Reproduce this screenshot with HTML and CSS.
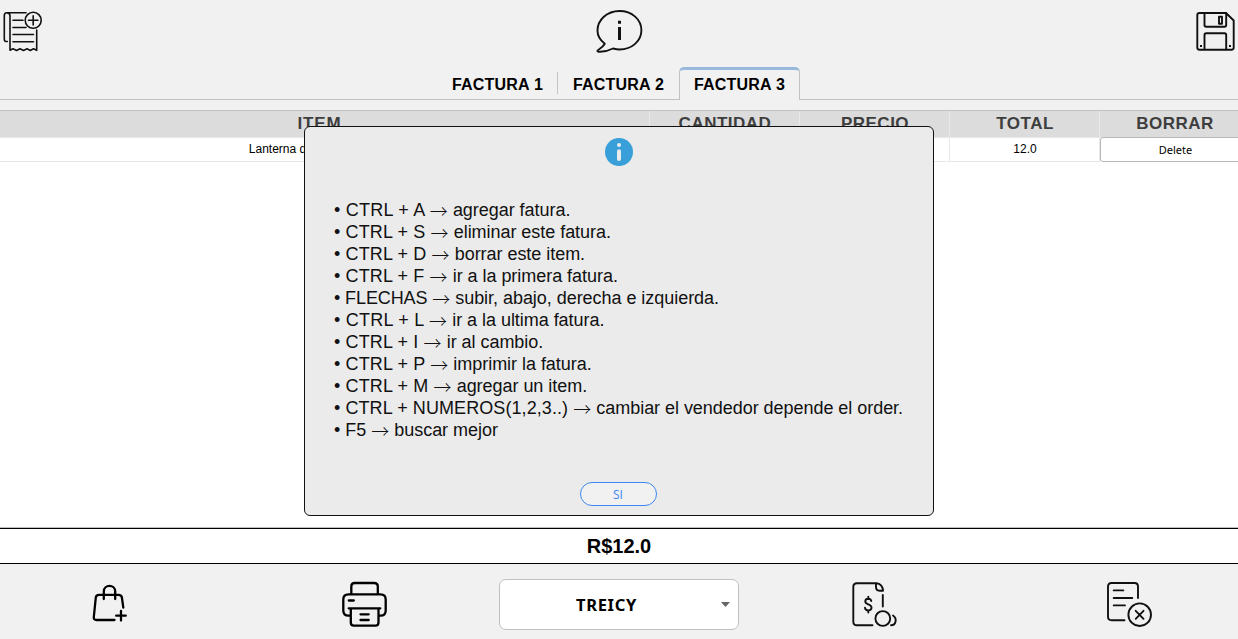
FILE: index.html
```html
<!DOCTYPE html>
<html lang="es">
<head>
<meta charset="utf-8">
<title>Facturas</title>
<link rel="stylesheet" href="styles.css">
</head>
<body>
<div class="app">
  <header class="toolbar">
    <svg class="icon" width="60" height="60" viewBox="0 0 60 60"><path d="M7.300 41.500H6Q4.300 41.500 4.300 39V15.500Q4.300 12.700 6.800 12.700H26M6.800 12.700Q10 12.700 10 16V50.300L13 48.800L16.600 50.500L20 48.800L23.500 50.500L27 48.800L30.300 50.500L33.500 48.800L36.700 50.300V30M13 20.300H23M13 27.500H26M13 34.500H33.500M13 41.800H33.500"/><circle cx="33.200" cy="20.300" r="8"/><path d="M33.200 15.700V25M28.500 20.300H37.900"/></svg>
    <svg class="icon" width="60" height="60" viewBox="-1 0 60 60"><path class="stout" d="M14.800 43.800C10.500 40.500 7.500 36 7.500 30.800C7.500 19.800 17 11 29.500 11C42 11 51.400 19.500 51.400 30.300C51.400 41 42 49.500 29.500 49.500C27 49.500 25 49 23 48.500C18.500 50.800 13.500 52 8.500 51.700C6.300 51.500 8 49.800 9.500 49Q13 46.800 14.800 43.800Z"/><path class="solid" d="M28 27H31V40H28ZM28 20.700H31V23.700H28Z"/></svg>
    <svg class="icon" width="60" height="60" viewBox="0 0 60 60"><path class="stout" d="M21.500 13H48L55.700 20.500V47.500Q55.700 49.700 53.500 49.700H21.500Q19.300 49.700 19.300 47.500V15.200Q19.300 13 21.500 13ZM26.500 13V25Q26.500 26.700 28.200 26.700H46.500Q48.200 26.700 48.200 25V13M26.500 49.700V35Q26.500 33.300 28.200 33.300H46.500Q48.200 33.300 48.200 35V49.700M41 16.700H44V23.700H41Z"/><path class="solid" d="M22 45H24V47H22ZM51 45H53V47H51Z"/></svg>
  </header>
  <nav class="tabs"><div class="tab first">FACTURA 1</div><div class="tab second">FACTURA 2</div><div class="tab active">FACTURA 3</div></nav>
  <main class="table">
    <div class="row head"><div>ITEM</div><div>CANTIDAD</div><div>PRECIO</div><div>TOTAL</div><div>BORRAR</div></div>
    <div class="row body"><div>Lanterna de cabeza led</div><div>1</div><div>12.0</div><div>12.0</div><button class="delete">Delete</button></div>
  </main>
  <div class="total">R$12.0</div>
  <footer class="actions">
    <svg class="icon bold" width="60" height="69" viewBox="0 0 60 69"><path d="M34.500 50H16.500Q13.500 50 13.800 47L15.800 27.500Q16.100 24.800 19 24.800H38.500Q41.500 24.800 41.900 27.500L43.300 37.500M23.800 29V21.500C23.800 14 35.200 14 35.200 21.500V29M41 41V50.500M36.200 45.700H45.800"/></svg>
    <svg class="icon bold" width="70" height="69" viewBox="0 0 70 69"><path d="M21.300 24V16.500Q21.300 13 24.800 13H44Q47.800 13 47.800 16.500V24M20.800 45.700H18.500Q13.300 45.700 13.300 40.500V29.500Q13.300 24.300 18.500 24.300H50.500Q55.700 24.300 55.700 29.500V40.500Q55.700 45.700 50.500 45.700H48.500M18.700 38.300H50.300M20.800 38.300V52.500Q20.800 55.600 23.800 55.600H45.500Q48.500 55.600 48.500 52.500V38.300M18.800 30.500H23.800M30.500 44.300H38.700M30.500 50H38.700"/></svg>
    <div class="select"><span>TREICY</span><svg width="9" height="5" viewBox="0 0 9 5"><path d="M0 0H9L4.500 5Z"/></svg></div>
    <svg class="icon" width="70" height="69" viewBox="0 0 70 69"><path class="stout" d="M32.500 55.300H17Q13.300 55.300 13.300 51.500V17Q13.300 13.300 17 13.300H36.500C40.500 13.300 43 17 43 20.700H39.500Q36 20.700 36 17V13.300M42.800 25V36.500M31.300 31C30.500 28 25.300 28 25.300 31.500C25.300 35.200 31.500 33.500 31.500 37.500C31.500 41.300 25.500 41.200 25 37.800M28.300 26.800V29M28.300 40.500V42.500M53 45.500C57.500 48.500 56 55.200 51 55.300"/><circle class="stout" cx="42.800" cy="48.500" r="7.400"/></svg>
    <svg class="icon" width="70" height="69" viewBox="0 0 70 69"><path class="stout" d="M29.500 50.300H16.500Q13 50.300 13 46.800V16.500Q13 13 16.500 13H39.500Q43 13 43 16.500V28M18.700 20.400H28.300M18.700 28H37.300M18.700 35.400H30M40.700 40.800L48.500 48.800M48.500 40.800L40.700 48.800"/><circle class="stout" cx="44.700" cy="44.700" r="11.300"/></svg>
  </footer>
  <section class="dialog">
    <svg class="info" width="28" height="28" viewBox="0 0 28 28"><circle cx="14" cy="14" r="14"/><path d="M14 13.200V21"/><path d="M14 7V7.100"/></svg>
    <ul class="shortcuts">
      <li><b class="loose">• CTRL + A <i>→</i></b> agregar fatura.</li>
      <li><b>• CTRL + S <i>→</i></b> eliminar este fatura.</li>
      <li><b>• CTRL + D <i>→</i></b> borrar este item.</li>
      <li><b>• CTRL + F <i>→</i></b> ir a la primera fatura.</li>
      <li><b class="tight">• FLECHAS <i>→</i></b> subir, abajo, derecha e izquierda.</li>
      <li><b class="loose">• CTRL + L <i>→</i></b> ir a la ultima fatura.</li>
      <li><b>• CTRL + I <i>→</i></b> ir al cambio.</li>
      <li><b>• CTRL + P <i>→</i></b> imprimir la fatura.</li>
      <li><b>• CTRL + M <i>→</i></b> agregar un item.</li>
      <li><b class="long">• CTRL + NUMEROS(1,2,3..) <i>→</i></b> cambiar el vendedor depende el order.</li>
      <li><b class="short">• F5 <i>→</i></b> buscar mejor</li>
    </ul>
    <button class="ok">SI</button>
  </section>
</div>
</body>
</html>
```
FILE: styles.css
```css
* { box-sizing: border-box; }
body { margin: 0; font-family: "Liberation Sans", Arial, sans-serif; color: #000; }
.app { position: relative; width: 1238px; height: 639px; overflow: hidden; display: flex; flex-direction: column; background: #f1f1f1; }
.toolbar { height: 67px; flex: none; display: grid; grid-template-columns: 60px 60px 60px; justify-content: space-between; }
.icon { display: block; fill: none; stroke: #111; stroke-width: 1.6; stroke-linecap: round; stroke-linejoin: round; }
.icon .stout { stroke-width: 1.9; }
.icon .solid { fill: #111; stroke: none; }
.icon.bold { stroke: #000; stroke-width: 2.3; }
.tabs { height: 33px; flex: none; padding-left: 437px; display: flex; border-bottom: 1px solid #c2c2c2; font-size: 16px; font-weight: bold; line-height: 36px; letter-spacing: .2px; text-align: center; }
.tab { height: 32px; }
.first { width: 121px; background: linear-gradient(#c4c4c4, #c4c4c4) 120px 5px / 1px 22px no-repeat; }
.second { width: 121px; }
.active { height: 33px; width: 121px; border: 1px solid #c2c2c2; border-top: 3px solid #98b9dc; border-bottom: 0; border-radius: 5px 5px 0 0; background: #f1f1f1; line-height: 30px; }
.table { margin-top: 10px; height: 418px; flex: none; border-top: 1px solid #c0c0c0; border-bottom: 1px solid #c0c0c0; background: #fff; }
.row { display: grid; grid-template-columns: 650px 150px 150px 150px 150px; text-align: center; }
.row > div { border-right: 1px solid #e8e8e8; border-bottom: 1px solid #e8e8e8; }
.head { height: 26px; background: #dcdcdc; color: #3e3e3e; font-size: 17px; font-weight: bold; line-height: 26px; letter-spacing: .5px; }
.head > div { padding-left: 1px; }
.head > div:first-child { padding: 0 10px 0 0; letter-spacing: .8px; }
.body { height: 25px; font-size: 12px; line-height: 24px; }
.body > div { padding-left: 1px; }
.body > div:first-child { padding-right: 27px; }
.delete { height: 25px; padding: 0 0 0 1px; border: 1px solid #b9b9b9; border-radius: 3px; background: #fff; color: #000; font: 11px "Noto Sans", sans-serif; }
.total { height: 36px; flex: none; border-top: 1px solid #000; border-bottom: 1px solid #000; background: #fff; text-align: center; font-size: 20px; font-weight: bold; line-height: 34px; }
.actions { height: 75px; flex: none; padding: 6px 73px 0 80px; display: grid; grid-template-columns: 60px 359px 341px 255px 70px; justify-content: start; }
.actions > :nth-child(2) { margin-left: 190px; }
.select { width: 240px; height: 51px; margin-top: 9px; padding: 0 8px 0 0; border: 1px solid #c0c0c0; border-radius: 7px; background: #fff; display: grid; grid-template-columns: 1fr 9px; align-items: center; text-align: center; font: bold 16.5px "Noto Sans", sans-serif; letter-spacing: .7px; }
.select span { margin-left: -8px; }
.select path { fill: #666; }
.dialog { position: absolute; left: 304px; top: 126px; width: 630px; height: 390px; padding-top: 11px; border: 1px solid #111; border-radius: 6px; background: #ebebeb; display: flex; flex-direction: column; align-items: center; }
.info { fill: #389fd8; flex: none; }
.info path { fill: none; stroke: #ebebeb; stroke-width: 4; stroke-linecap: round; }
.shortcuts { list-style: none; width: 100%; height: 242px; margin: 33px 0 0; padding: 0 0 0 29px; color: #111; font-size: 18px; line-height: 22px; letter-spacing: -.04px; white-space: nowrap; }
.shortcuts li { height: 22px; }
.shortcuts b { font-weight: normal; letter-spacing: .13px; }
.shortcuts .loose { letter-spacing: .23px; }
.shortcuts .tight { letter-spacing: -.1px; }
.shortcuts .long { letter-spacing: .08px; }
.shortcuts .short { letter-spacing: 0; }
.shortcuts i { font-family: "Noto Sans CJK SC", sans-serif; font-weight: 300; font-style: normal; line-height: 0; vertical-align: -1.5px; }
.ok { width: 77px; height: 24px; margin: 41px 2px 0 0; padding: 0; border: 1px solid #3c87f5; border-radius: 12px; background: #f1f1f1; color: #3c87f5; font: 12px "Open Sans", sans-serif; }
```
